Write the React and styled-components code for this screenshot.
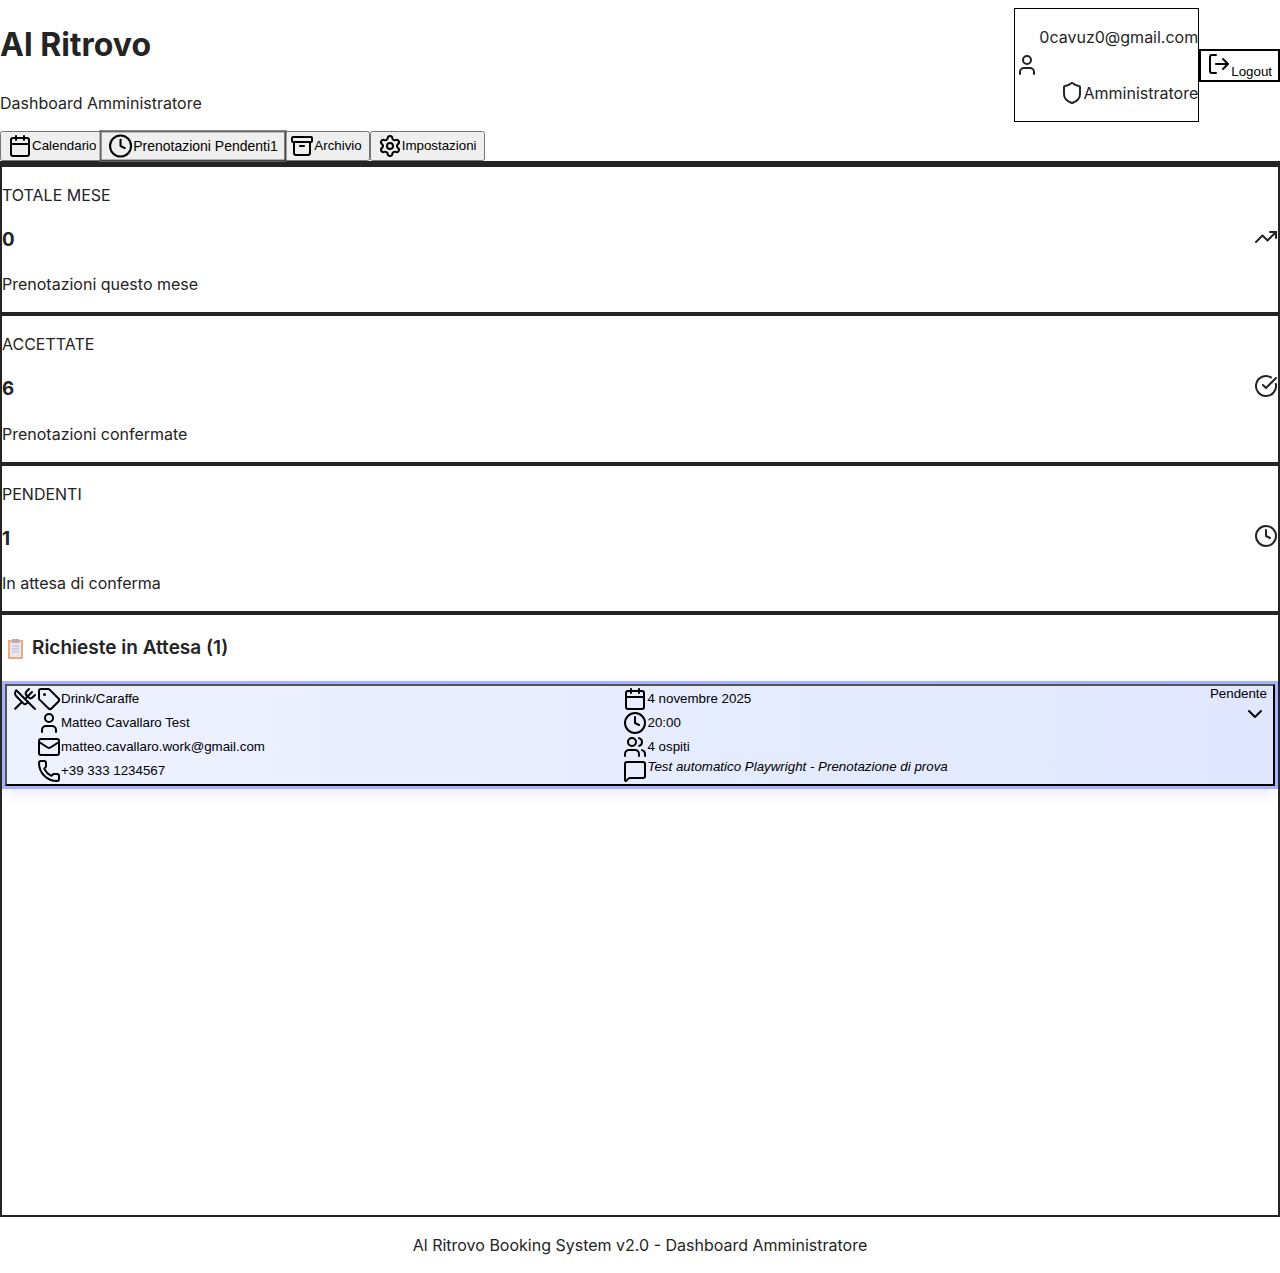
import styled, { createGlobalStyle } from "styled-components";
import {
  Archive,
  Calendar,
  ChevronDown,
  CircleCheckBig,
  Clock,
  LogOut,
  Mail,
  MessageSquare,
  Phone,
  Settings,
  Shield,
  Tag,
  TrendingUp,
  User,
  Users,
  UtensilsCrossed,
} from "lucide-react";

const GlobalStyle = createGlobalStyle`
  body {
    margin: 0;
    font-family: Inter, "Noto Sans", sans-serif;
    line-height: 1.5;
    color: #242424;
    background: #fff;
  }
`;

const Page = styled.div`
  display: flex;
  flex-direction: column;
  min-height: 100vh;
`;

const Header = styled.header`
  display: flex;
  justify-content: space-between;
  align-items: center;
`;

const Title = styled.h1`
  font-size: 32px;
  font-weight: 700;
  margin: 21.44px 0;
`;

const Subtitle = styled.p`
  margin: 16px 0;
`;

const HeaderRight = styled.div`
  display: flex;
  align-items: center;
`;

const UserBox = styled.div`
  display: flex;
  align-items: center;
  margin: 8px 0;
  border: 1px solid #000;
`;

const UserInfo = styled.div`
  display: flex;
  flex-direction: column;
  align-items: flex-end;
`;

const UserLine = styled.p`
  display: flex;
  align-items: center;
  margin: 16px 0;
`;

const LogoutButton = styled.button`
  border: 2px solid #000;
  background: #fff;
  color: #000;
`;

const Tabs = styled.nav`
  display: flex;
`;

const TabButton = styled.button`
  display: flex;
  align-items: center;
  ${(p) =>
    p.$active &&
    `
    position: relative;
    z-index: 1;
    transform: scale(1.05);
    border: 2px solid;
    border-color: #666 #444 #444 #666;
    background: #efefef;
    color: #000;
  `}
`;

const Main = styled.main`
  flex: 1;
  border: solid #242424;
  border-width: 6px 2px 2px;
`;

const StatCard = styled.section`
  display: flex;
  justify-content: space-between;
  align-items: center;
  border-bottom: 4px solid #242424;
`;

const StatLabel = styled.p`
  margin: 16px 0;
`;

const StatValue = styled.h3`
  font-size: 18.72px;
  font-weight: 700;
  margin: 18.72px 0;
`;

const StatNote = styled.p`
  margin: 16px 0;
`;

const Requests = styled.section`
  padding: 0 3px;
`;

const RequestsTitle = styled.h2`
  display: flex;
  align-items: center;
  gap: 9px;
  font-size: 19px;
  font-weight: 600;
  margin: 19px 0 21px;
  padding-left: 3px;
`;

const RequestButton = styled.button`
  display: grid;
  grid-template-columns: 610px 1fr auto;
  width: 100%;
  text-align: left;
  border: 2px outset #000;
  color: #000;
  background: linear-gradient(90deg, #eef2ff, #e0e7ff);
  box-shadow: 0 0 0 3px #a5b4fc, 0 4px 14px rgba(99, 102, 241, 0.2);
`;

const Column = styled.div`
  display: flex;
  flex-direction: column;
`;

const InfoRow = styled.div`
  display: grid;
  grid-template-columns: ${(p) => (p.$indent ? "48px 1fr" : "24.5px 1fr")};
  align-items: ${(p) => (p.$top ? "start" : "center")};
  height: 24px;
  justify-items: ${(p) => (p.$indent ? "end" : "start")};
`;

const InfoIcons = styled.span`
  display: flex;
`;

const InfoText = styled.span`
  justify-self: start;
  padding-bottom: 1px;
  ${(p) => p.$note && "font-style: italic; padding-bottom: 0;"}
`;

const StatusColumn = styled.div`
  display: flex;
  flex-direction: column;
  align-items: flex-end;
`;

const StatusLabel = styled.span`
  margin: -1px 0 1px;
`;

const Footer = styled.footer`
  text-align: center;
`;

const FooterText = styled.p`
  margin: 16px 0;
`;

const tabs = [
  { label: "Calendario", icon: Calendar },
  { label: "Prenotazioni Pendenti1", icon: Clock, active: true },
  { label: "Archivio", icon: Archive },
  { label: "Impostazioni", icon: Settings },
];

const stats = [
  { label: "TOTALE MESE", value: "0", note: "Prenotazioni questo mese", icon: TrendingUp },
  { label: "ACCETTATE", value: "6", note: "Prenotazioni confermate", icon: CircleCheckBig },
  { label: "PENDENTI", value: "1", note: "In attesa di conferma", icon: Clock },
];

// the reference shows the clipboard emoji in a paler face than the installed one
function ClipboardMark() {
  return (
    <svg width="15" height="20" viewBox="0 0 15 20" aria-hidden="true">
      <rect x="0" y="1" width="15" height="19" fill="#e8ad80" />
      <rect x="2" y="3" width="11" height="15" fill="#e9e6f2" />
      <rect x="4" y="0" width="7" height="4" fill="#b3aeb8" />
      <path d="M4 7h7M4 10h7M4 13h7" stroke="#b9b5cc" />
    </svg>
  );
}

export default function App() {
  return (
    <Page>
      <GlobalStyle />
      <Header>
        <div>
          <Title>Al Ritrovo</Title>
          <Subtitle>Dashboard Amministratore</Subtitle>
        </div>
        <HeaderRight>
          <UserBox>
            <User />
            <UserInfo>
              <UserLine>0cavuz0@gmail.com</UserLine>
              <UserLine>
                <Shield />
                Amministratore
              </UserLine>
            </UserInfo>
          </UserBox>
          <LogoutButton>
            <LogOut />
            Logout
          </LogoutButton>
        </HeaderRight>
      </Header>

      <Tabs>
        {tabs.map(({ label, icon: Icon, active }) => (
          <TabButton key={label} $active={active}>
            <Icon />
            {label}
          </TabButton>
        ))}
      </Tabs>

      <Main>
        {stats.map(({ label, value, note, icon: Icon }) => (
          <StatCard key={label}>
            <div>
              <StatLabel>{label}</StatLabel>
              <StatValue>{value}</StatValue>
              <StatNote>{note}</StatNote>
            </div>
            <div>
              <Icon />
            </div>
          </StatCard>
        ))}

        <Requests>
          <RequestsTitle>
            <ClipboardMark />
            Richieste in Attesa (1)
          </RequestsTitle>
          <RequestButton>
            <Column>
              <InfoRow $indent>
                <InfoIcons>
                  <UtensilsCrossed />
                  <Tag />
                </InfoIcons>
                <InfoText>Drink/Caraffe</InfoText>
              </InfoRow>
              <InfoRow $indent>
                <User />
                <InfoText>Matteo Cavallaro Test</InfoText>
              </InfoRow>
              <InfoRow $indent>
                <Mail />
                <InfoText>matteo.cavallaro.work@gmail.com</InfoText>
              </InfoRow>
              <InfoRow $indent>
                <Phone />
                <InfoText>+39 333 1234567</InfoText>
              </InfoRow>
            </Column>
            <Column>
              <InfoRow>
                <Calendar />
                <InfoText>4 novembre 2025</InfoText>
              </InfoRow>
              <InfoRow>
                <Clock />
                <InfoText>20:00</InfoText>
              </InfoRow>
              <InfoRow>
                <Users />
                <InfoText>4 ospiti</InfoText>
              </InfoRow>
              <InfoRow $top>
                <MessageSquare />
                <InfoText $note>Test automatico Playwright - Prenotazione di prova</InfoText>
              </InfoRow>
            </Column>
            <StatusColumn>
              <StatusLabel>Pendente</StatusLabel>
              <ChevronDown />
            </StatusColumn>
          </RequestButton>
        </Requests>
      </Main>

      <Footer>
        <FooterText>Al Ritrovo Booking System v2.0 - Dashboard Amministratore</FooterText>
      </Footer>
    </Page>
  );
}
